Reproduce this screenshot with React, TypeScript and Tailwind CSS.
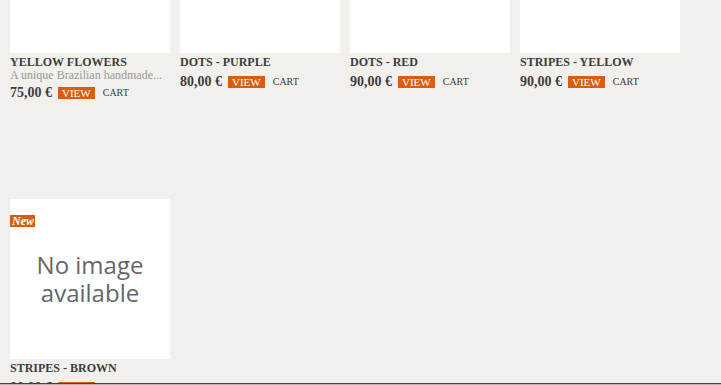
import React from "react";

type P = { name: string; desc?: string; price: string; isNew?: boolean; noImg?: boolean };

const items: P[] = [
  { name: "YELLOW FLOWERS", desc: "A unique Brazilian handmade...", price: "75,00 €" },
  { name: "DOTS - PURPLE", price: "80,00 €" },
  { name: "DOTS - RED", price: "90,00 €" },
  { name: "STRIPES - YELLOW", price: "90,00 €" },
  { name: "STRIPES - BROWN", price: "80,00 €", isNew: true, noImg: true },
];

function Card({ p }: { p: P }) {
  return (
    <div className="h-[296px] w-[160px]">
      <div className="relative h-[160px] w-[160px] bg-white">
        {p.isNew && (
          <span className="absolute left-0 top-[16px] bg-[#d95d10] pl-[2px] pr-[1px] text-[12px] font-bold italic leading-[12px] text-white">
            New
          </span>
        )}
        {p.noImg && (
          <div
            className="flex h-full w-full items-center justify-center text-center text-[24px] leading-[28px] text-[#666]"
            style={{ fontFamily: '"Open Sans", "Noto Sans", sans-serif' }}
          >
            No image
            <br />
            available
          </div>
        )}
      </div>
      <div className="mt-[2px] text-[12px] font-bold leading-[15px] text-[#3d3d3d]">{p.name}</div>
      {p.desc && (
        <div className="whitespace-nowrap text-[12px] leading-[11px] text-[#9a9a9a]">{p.desc}</div>
      )}
      <div className="mt-[5px] flex items-center">
        <span className="text-[14px] font-bold leading-[14px] text-[#3d3d3d]">{p.price}</span>
        <span className="ml-[6px] bg-[#d95d10] px-[4px] text-[11px] leading-[12px] text-white">VIEW</span>
        <span className="ml-[8px] text-[10px] leading-[12px] text-[#3d3d3d]">CART</span>
      </div>
    </div>
  );
}

export default function App() {
  return (
    <div
      className="relative h-[385px] w-[721px] overflow-hidden bg-[#f1f0ec]"
      style={{ fontFamily: '"Liberation Serif", "DejaVu Serif", serif' }}
    >
      <div className="-mt-[107px] grid grid-cols-[160px_160px_160px_160px] gap-x-[10px] gap-y-[10px] pl-[10px]">
        {items.map((p) => (
          <Card key={p.name} p={p} />
        ))}
      </div>
      <div className="absolute bottom-0 left-0 right-0 h-[2px] border-t border-[#444] bg-[#b5b5b5]" />
    </div>
  );
}
